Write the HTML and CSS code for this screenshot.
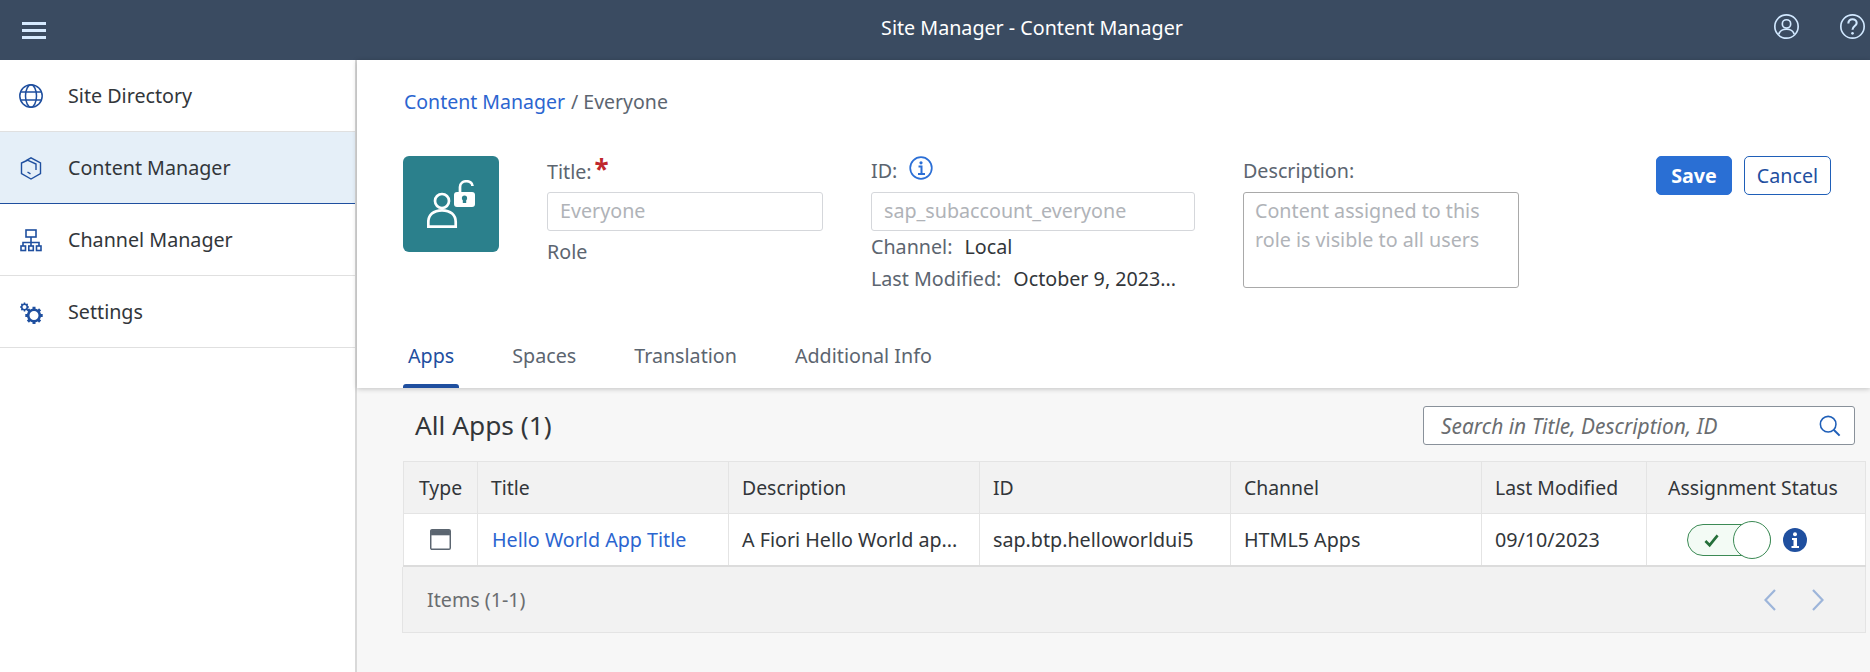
FILE: index.html
```html
<!DOCTYPE html>
<html lang="en">
<head>
<meta charset="utf-8">
<title>Site Manager - Content Manager</title>
<link rel="stylesheet" href="styles.css">
</head>
<body>
<header class="shell">
  <button class="menu-btn" aria-label="Menu"><span></span><span></span><span></span></button>
  <div class="shell-title">Site Manager - Content Manager</div>
  <div class="shell-icons">
    <svg class="shell-icon" viewBox="0 0 24 24" fill="none" stroke="#d1e8ff" stroke-width="1.6"><circle cx="12" cy="12" r="11.2"/><circle cx="12" cy="9.5" r="4"/><path d="M4.6 19.5C5.5 16 8 14.6 12 14.6s6.500 1.400 7.400 4.900" /></svg>
    <svg class="shell-icon" viewBox="0 0 24 24" fill="none" stroke="#d1e8ff" stroke-width="1.6"><circle cx="12" cy="12" r="11.200"/><path d="M8 9c0-2.600 1.800-4 4-4s4 1.400 4 3.600c0 3-4 3-4 6.400" stroke-width="2"/><circle cx="12" cy="18.500" r="1.300" fill="#d1e8ff" stroke="none"/></svg>
  </div>
</header>
<div class="layout">
  <nav class="side">
    <a class="side-item">
      <svg class="side-icon" viewBox="0 0 24 24" fill="none" stroke="#1f4f9f" stroke-width="1.500"><circle cx="12" cy="12" r="11.200"/><ellipse cx="12" cy="12" rx="5.500" ry="11.200"/><path d="M1.800 8h20.400M1.800 16h20.400" stroke-width="1.700"/></svg>
      <span>Site Directory</span>
    </a>
    <a class="side-item side-item-active">
      <svg class="side-icon" viewBox="0 0 24 24" fill="none" stroke="#1f4f9f" stroke-width="1.400"><path d="M7 4.600 12 1.800l9.500 5.200v10.500L12 23 2.500 17.500V7l6.500-3"/><path d="M9 4.400 17 8v6M8.500 16l3 1.800"/></svg>
      <span>Content Manager</span>
    </a>
    <a class="side-item">
      <svg class="side-icon" viewBox="0 0 24 24" fill="none" stroke="#1f4f9f" stroke-width="1.600"><rect x="7" y="2" width="10" height="7"/><path d="M12 9v5M4 18v-3.500h16V18M12 14.500V18"/><rect x="2" y="18" width="4.500" height="4.500"/><rect x="9.800" y="18" width="4.500" height="4.500"/><rect x="17.500" y="18" width="4.500" height="4.500"/></svg>
      <span>Channel Manager</span>
    </a>
    <a class="side-item">
      <svg class="side-icon" viewBox="0 0 24 24" fill="none" stroke="#1f4f9f"><g transform="translate(0 2)"><circle cx="5.500" cy="5" r="2.800" stroke-width="1.600"/><path d="M5.500.6v1.600M5.500 7.800v1.600M1.100 5h1.600M8.300 5h1.600M2.400 1.900l1.100 1.100M7.500 7l1.100 1.100M2.400 8.100 3.500 7M7.500 3l1.100-1.100" stroke-width="1.500"/></g><circle cx="15" cy="15.500" r="5.800" stroke-width="2.600"/><path d="M15 6.800v2.600M15 21.600v2.600M6.300 15.500h2.600M21.100 15.500h2.600M8.900 9.400l1.800 1.800M19.300 19.800l1.800 1.800M8.900 21.600l1.800-1.800M19.300 11.200l1.800-1.800" stroke-width="3"/></svg>
      <span>Settings</span>
    </a>
  </nav>
  <main class="main">
    <section class="head">
      <div class="crumbs"><a class="link">Content Manager</a><span class="crumb-sep">/</span><span class="crumb-cur">Everyone</span></div>
      <div class="form-row">
        <div class="tile">
          <svg class="tile-icon" viewBox="0 0 48 48" fill="none" stroke="#fff" stroke-width="2.700">
            <circle cx="15" cy="21" r="7"/>
            <path d="M1.300 46.700V42c0-7 5-11.700 13.700-11.700S28.700 35 28.700 42v4.700z"/>
            <path d="M33 13V7c0-7.500 12.500-7.500 12.500-1"/>
            <rect x="27" y="12" width="21" height="15" rx="3" fill="#fff" stroke="none"/>
            <circle cx="37.500" cy="18" r="2.600" fill="#2b808c" stroke="none"/>
            <path d="M37.500 18v5" stroke="#2b808c" stroke-width="3.400"/>
          </svg>
        </div>
        <div class="col col-title">
          <div class="label label-title">Title:<span class="req">*</span></div>
          <div class="input">Everyone</div>
          <div class="sub">Role</div>
        </div>
        <div class="col col-id">
          <div class="label label-id">ID:
            <svg class="id-info" viewBox="0 0 24 24" fill="none" stroke="#2b6fd6" stroke-width="1.700"><circle cx="12" cy="12" r="10.800"/><path d="M9.500 10.500H12.500V17.800M9 18h7" stroke-width="2"/><circle cx="12" cy="6.800" r="1.600" fill="#2b6fd6" stroke="none"/></svg>
          </div>
          <div class="input">sap_subaccount_everyone</div>
          <div class="meta meta-first"><span class="meta-key">Channel:</span><span class="meta-val">Local</span></div>
          <div class="meta"><span class="meta-key">Last Modified:</span><span class="meta-val">October 9, 2023...</span></div>
        </div>
        <div class="col col-desc">
          <div class="label label-desc">Description:</div>
          <div class="textarea">Content assigned to this role is visible to all users</div>
        </div>
        <div class="actions">
          <button class="btn btn-save">Save</button>
          <button class="btn btn-cancel">Cancel</button>
        </div>
      </div>
      <div class="tabs">
        <a class="tab tab-active">Apps</a>
        <a class="tab">Spaces</a>
        <a class="tab">Translation</a>
        <a class="tab">Additional Info</a>
      </div>
    </section>
    <section class="list">
      <div class="list-top">
        <h2 class="list-title">All Apps (1)</h2>
        <div class="search">
          <span class="search-text">Search in Title, Description, ID</span>
          <svg class="search-icon" viewBox="0 0 24 24" fill="none" stroke="#1f5fb8" stroke-width="1.700"><circle cx="10" cy="10" r="8.500"/><path d="m16 16 6.500 6.500" stroke-width="2.200"/></svg>
        </div>
      </div>
      <div class="table">
        <div class="row row-head">
          <div class="cell cell-type">Type</div>
          <div class="cell">Title</div>
          <div class="cell">Description</div>
          <div class="cell">ID</div>
          <div class="cell">Channel</div>
          <div class="cell">Last Modified</div>
          <div class="cell cell-status">Assignment Status</div>
        </div>
        <div class="row row-body">
          <div class="cell cell-type">
            <svg class="type-icon" viewBox="0 0 20 20" fill="none"><rect x=".7" y=".7" width="18.600" height="18.600" rx="1.200" stroke="#5b6570" stroke-width="1.400"/><rect x="1" y="1" width="18" height="5" fill="#5b6570"/></svg>
          </div>
          <div class="cell cell-link"><a class="link">Hello World App Title</a></div>
          <div class="cell">A Fiori Hello World ap...</div>
          <div class="cell">sap.btp.helloworldui5</div>
          <div class="cell">HTML5 Apps</div>
          <div class="cell">09/10/2023</div>
          <div class="cell cell-status">
            <div class="toggle">
              <svg class="toggle-check" viewBox="0 0 16 16" fill="none" stroke="#256f3a" stroke-width="2.800"><path d="M1.500 8.500 6 13 14.500 2.500"/></svg>
              <span class="toggle-knob"></span>
            </div>
            <svg class="status-info" viewBox="0 0 24 24"><circle cx="12" cy="12" r="12" fill="#1f4f9f"/><path d="M9 10h5v8h2v2H8.500v-2h2v-6H9z" fill="#fff"/><circle cx="12" cy="6.300" r="2" fill="#fff"/></svg>
          </div>
        </div>
        <div class="foot">
          <span class="foot-text">Items (1-1)</span>
          <div class="pager">
            <svg class="chev" viewBox="0 0 12 22" fill="none" stroke="#9db5da" stroke-width="2.200"><path d="M11 1 1.500 11 11 21"/></svg>
            <svg class="chev" viewBox="0 0 12 22" fill="none" stroke="#9db5da" stroke-width="2.200"><path d="M1 1l9.500 10L1 21"/></svg>
          </div>
        </div>
      </div>
    </section>
  </main>
</div>
</body>
</html>
```

FILE: styles.css
```css
* { box-sizing: border-box; }
html, body { margin: 0; height: 100%; }
body {
  font-family: "Noto Sans", "Open Sans", sans-serif;
  font-size: 19.7px;
  color: #32363a;
  background: #fff;
  overflow: hidden;
}
.shell {
  height: 60px;
  background: #3a4b61;
  display: flex;
  align-items: center;
  color: #fff;
}
.menu-btn {
  width: 24px;
  height: 17px;
  margin-left: 22px;
  padding: 0;
  border: 0;
  background: none;
  display: flex;
  flex-direction: column;
  justify-content: space-between;
}
.menu-btn span { display: block; height: 3px; background: #d6eaff; }
.shell-title {
  flex: 1;
  text-align: center;
  padding-left: 244px;
  line-height: 24px;
  margin-top: -4px;
}
.shell-icons { display: flex; gap: 41px; margin-right: 5px; margin-top: -8px; }
.shell-icon { width: 25px; height: 25px; display: block; }
.layout { display: flex; height: 612px; }
.side { width: 357px; border-right: 2px solid #d9d9d9; background: #fff; flex: none; }
.side-item {
  display: flex;
  align-items: center;
  height: 72px;
  border-bottom: 1px solid #e0e0e0;
  padding-left: 19px;
  gap: 25px;
  color: #32363a;
}
.side-item-active { background: #e5eff8; border-bottom: 1px solid #1f4f9f; }
.side-icon { width: 24px; height: 24px; flex: none; }
.main { flex: 1; min-width: 0; display: flex; flex-direction: column; }
.head {
  height: 328px;
  padding: 0 0 0 46px;
  background: #fff;
  display: flex;
  flex-direction: column;
  box-shadow: 0 1px 5px rgba(0,0,0,.22);
  position: relative;
  z-index: 1;
}
.link { color: #2b65d0; }
.crumbs { margin-top: 29px; height: 26px; line-height: 26px; padding-left: 1px; color: #5c6570; font-size: 19.5px; }
.crumb-sep { margin: 0 5px 0 6px; }
.form-row { display: flex; gap: 48px; margin-top: 41px; height: 140px; }
.tile {
  width: 96px; height: 96px;
  background: #2b808c;
  border-radius: 6px;
  display: flex; align-items: center; justify-content: center;
  flex: none;
}
.tile-icon { width: 48px; height: 48px; }
.col { flex: none; }
.col-title, .col-desc { width: 276px; }
.col-id { width: 324px; }
.label { height: 36px; line-height: 30px; color: #5c6570; }
.label-id { display: flex; align-items: flex-start; gap: 12px; }
.id-info { width: 24px; height: 24px; margin-top: 0; }
.req { color: #c0272d; font-size: 26px; line-height: 26px; margin-left: 3px; font-weight: 700; }
.input {
  height: 39px;
  border: 1px solid #d5d7db;
  border-radius: 3px;
  padding: 0 12px;
  line-height: 36px;
  color: #b0b3b8;
  background: #fff;
}
.sub { margin-top: 8px; line-height: 26px; color: #5c6570; }
.meta { line-height: 26px; margin-top: 6px; white-space: nowrap; }
.meta-first { margin-top: 3px; }
.meta-key { color: #5c6570; margin-right: 12px; }
.meta-val { color: #32363a; }
.textarea {
  height: 96px;
  border: 1px solid #a9a9a9;
  border-radius: 3px;
  padding: 3px 11px;
  line-height: 29px;
  color: #b0b3b8;
}
.actions { display: flex; gap: 12px; margin-left: auto; margin-right: 39px; align-items: flex-start; }
.btn {
  height: 39px;
  border-radius: 5px;
  font: inherit;
  padding: 0;
}
.btn-save { width: 76px; background: #2a6fd4; border: 1px solid #2a6fd4; color: #fff; font-weight: 700; }
.btn-cancel { width: 87px; background: #fff; border: 1px solid #1f5fb8; color: #1f4f9f; }
.tabs { display: flex; gap: 48px; margin-top: 35px; flex: 1; align-items: stretch; }
.tab {
  padding: 0 5px;
  color: #5c6570;
  line-height: 52px;
  height: 58px;
  position: relative;
}
.tab-active { color: #1f4f9f; }
.tab-active::after {
  content: "";
  position: absolute;
  left: 0; right: 0; bottom: 0;
  height: 4px;
  background: #1f4f9f;
  border-radius: 3px 3px 0 0;
}
.list { flex: 1; background: #f7f7f7; padding: 18px 4px 0 46px; }
.list-top { display: flex; align-items: flex-start; justify-content: space-between; height: 55px; padding: 0 11px 0 12px; }
.list-title { margin: 0; font-weight: 400; font-size: 26.300px; line-height: 38px; color: #32363a; }
.search {
  width: 432px; height: 39px;
  border: 1px solid #89919a;
  border-radius: 3px;
  background: #fff;
  display: flex; align-items: center; justify-content: space-between;
  padding: 0 13px 0 17px;
}
.search-text { font-style: italic; color: #6a6d70; font-size: 20.900px; }
.search-icon { width: 22px; height: 24px; }
.table { width: 1463px; }
.row {
  display: grid;
  grid-template-columns: 75px 251px 251px 251px 251px 165px 219px;
}
.row-head { height: 52px; background: #f2f2f2; border-top: 1px solid #e4e4e4; font-size: 19.400px; }
.row-body { height: 54px; background: #fff; border-top: 1px solid #e4e4e4; border-bottom: 2px solid #dcdcdc; }
.cell {
  display: flex;
  align-items: center;
  padding: 0 13px;
  border-right: 1px solid #e4e4e4;
  white-space: nowrap;
  overflow: hidden;
  min-width: 0;
}
.cell-type { justify-content: center; padding: 0; border-left: 1px solid #e4e4e4; }
.cell-link { padding-left: 14px; }
.cell-status { padding: 0 6px 0 0; justify-content: center; }
.type-icon { width: 21px; height: 21px; }
.row-body .cell-status { overflow: visible; justify-content: flex-start; padding: 0 0 0 40px; gap: 12px; }
.toggle {
  position: relative;
  width: 84px; height: 32px;
  border: 1px solid #3c8a55;
  border-radius: 16px;
  background: #f3fbf5;
  flex: none;
}
.toggle-check { position: absolute; left: 16px; top: 8px; width: 15px; height: 15px; }
.toggle-knob {
  position: absolute;
  right: -1px; top: -4px;
  width: 38px; height: 38px;
  border-radius: 50%;
  background: #fff;
  border: 1px solid #3c8a55;
}
.status-info { width: 24px; height: 24px; flex: none; }
.foot {
  height: 66px;
  margin-left: -1px;
  background: #f2f2f2;
  border: 1px solid #e4e4e4;
  border-top: 0;
  display: flex; align-items: center; justify-content: space-between;
  padding: 0 41px 0 24px;
}
.foot-text { color: #6a6d70; }
.pager { display: flex; gap: 36px; }
.chev { width: 12px; height: 22px; display: block; }
```
